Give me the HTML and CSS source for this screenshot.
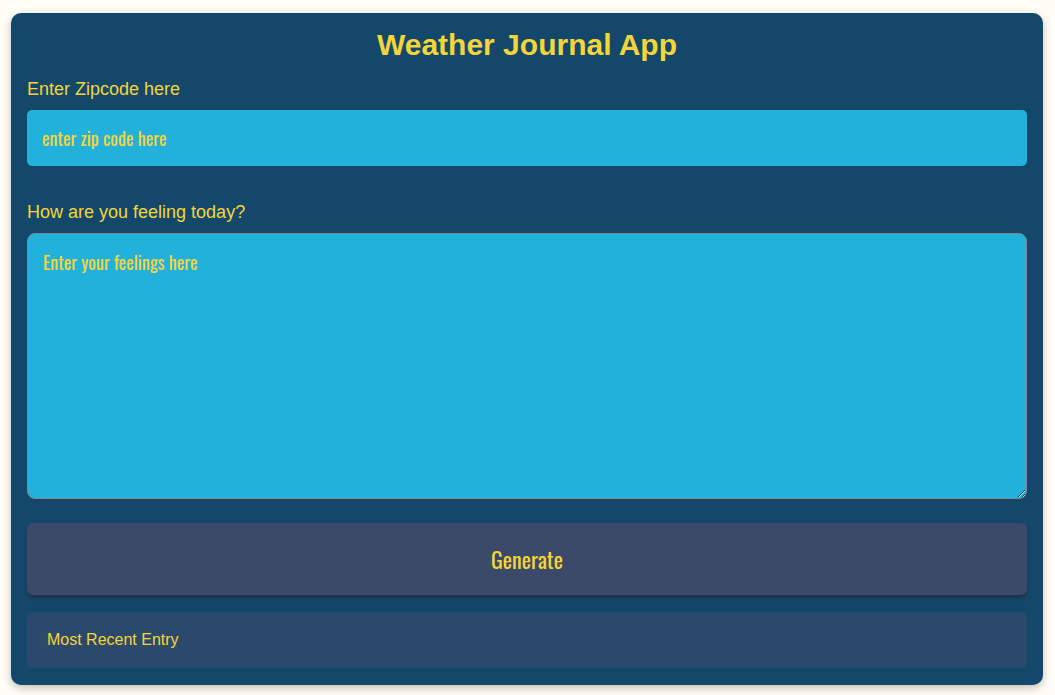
FILE: index.html
```html
<!DOCTYPE html>
<html>
<head>
<meta charset="utf-8">
<title>Weather Journal App</title>
<link rel="stylesheet" href="styles.css">
</head>
<body>
<main class="app">
  <h1 class="title">Weather Journal App</h1>
  <label class="label" for="zip">Enter Zipcode here</label>
  <input class="zip" id="zip" type="text" placeholder="enter zip code here">
  <label class="label label-feel" for="feelings">How are you feeling today?</label>
  <textarea class="feelings" id="feelings" placeholder="Enter your feelings here"></textarea>
  <button class="generate" type="button">Generate</button>
  <section class="entry">
    <div class="entry-title">Most Recent Entry</div>
  </section>
</main>
</body>
</html>
```
FILE: styles.css
```css
html, body {
  margin: 0;
  padding: 0;
  background: #fffef6;
}
body {
  padding: 13px 12px 10px 11px;
  font-family: "Liberation Sans", Arial, sans-serif;
}
.app {
  background: #13486b;
  border-radius: 10px;
  box-shadow: 0 3px 8px rgba(0,0,0,0.25);
  padding: 15px 16px 17px 16px;
  display: flex;
  flex-direction: column;
  box-sizing: border-box;
}
.title {
  margin: 0;
  text-align: center;
  color: #f5d53a;
  font-size: 30px;
  font-weight: bold;
  line-height: 34px;
}
.label {
  color: #f5d53a;
  font-size: 18px;
  line-height: 21px;
  margin-top: 17px;
}
.label-feel {
  margin-top: 36px;
}
.zip, .feelings {
  background: #22b1db;
  color: #f5d53a;
  font-family: "Oswald", "Liberation Sans Narrow", "DejaVu Sans Condensed", sans-serif;
  font-size: 18px;
  box-sizing: border-box;
  width: 100%;
  outline: none;
}
.zip {
  margin-top: 10px;
  height: 56px;
  border: none;
  border-radius: 5px;
  padding: 0 15px;
}
.feelings {
  margin-top: 10px;
  height: 266px;
  border: 1px solid #7a8a93;
  border-radius: 8px;
  padding: 15px 15px;
  resize: vertical;
}
.zip::placeholder, .feelings::placeholder {
  color: #f5d53a;
  opacity: 1;
}
.generate {
  margin-top: 24px;
  height: 72px;
  border: none;
  border-radius: 6px;
  background: #3c4a69;
  color: #f5d53a;
  font-family: "Oswald", "Liberation Sans Narrow", "DejaVu Sans Condensed", sans-serif;
  font-size: 22px;
  box-shadow: 0 3px 3px rgba(40,40,40,0.6);
}
.entry {
  margin-top: 17px;
  background: #2b4a6b;
  border-radius: 6px;
  height: 56px;
  padding: 0 20px;
  display: flex;
  align-items: center;
}
.entry-title {
  color: #f5d53a;
  font-size: 16px;
}
```
